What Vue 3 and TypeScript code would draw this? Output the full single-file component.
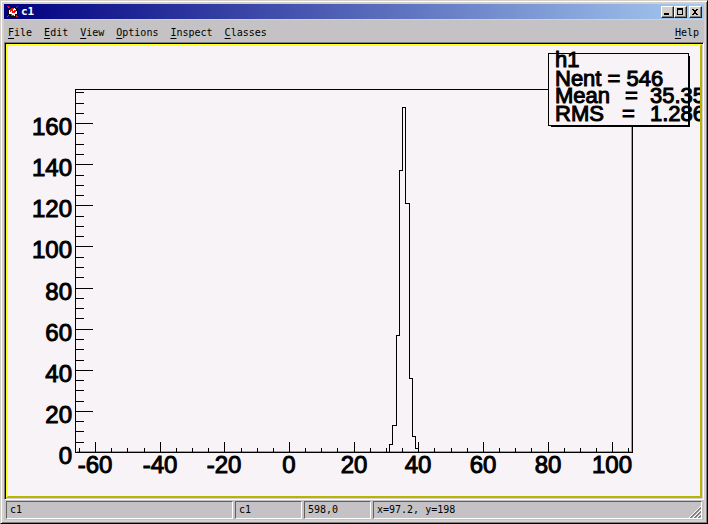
<script setup lang="ts">
interface Tick {
  value: number
  pos: number
  major: boolean
}

const frame = { left: 75, top: 89, right: 632, bottom: 452 }

const xPos = (v: number): number => Math.round(289 + v * 3.233)
const yPos = (v: number): number => Math.round(452 - v * 2.055)

function ticks(from: number, to: number, place: (v: number) => number): Tick[] {
  const out: Tick[] = []
  for (let value = from; value <= to; value += 5) {
    out.push({ value, pos: place(value), major: value % 20 === 0 })
  }
  return out
}

const xTicks = ticks(-65, 105, xPos)
const yTicks = ticks(0, 175, yPos)
const xLabels = xTicks.filter((t) => t.major)
const yLabels = yTicks.filter((t) => t.major)

const bins: { x: number; count: number }[] = [
  { x: 31, count: 4 },
  { x: 32, count: 13 },
  { x: 33, count: 57 },
  { x: 34, count: 137 },
  { x: 35, count: 168 },
  { x: 36, count: 121 },
  { x: 37, count: 36 },
  { x: 38, count: 8 },
  { x: 39, count: 2 },
]

const outline =
  `M${xPos(31)} ${frame.bottom}` +
  bins.map((b) => `V${yPos(b.count)}H${xPos(b.x + 1)}`).join('') +
  `V${frame.bottom}`

const menus = ['File', 'Edit', 'View', 'Options', 'Inspect', 'Classes']

const stats = [
  { name: 'Mean', value: '35.35', y: 103, eq: 625 },
  { name: 'RMS', value: '1.286', y: 121, eq: 622 },
]
</script>

<template>
  <main class="window">
    <header class="title">
      <svg class="logo" viewBox="0 0 12 12" shape-rendering="crispEdges" aria-hidden="true">
        <path d="M2 1H10V3H11V9H9V11H3V9H1V3H2Z" fill="#100808" />
        <path d="M4 2H8V3H9V5H10V8H8V10H4V8H2V4H4Z" fill="#fff" />
        <path d="M0 0H2V1H3V2H1V1H0ZM10 0H11V1H10V2H9V1H10ZM0 10H1V9H2V10H1V11H0ZM9 9H10V10H11V11H9ZM4 2H7V3H6V5H4V6H3V3H4ZM7 4H9V6H8V7H5V5H7ZM4 8H5V9H7V10H4Z" fill="#f01010" />
      </svg>
      <h1>c1</h1>
      <button type="button" aria-label="Minimize">
        <svg viewBox="0 0 10 9" shape-rendering="crispEdges"><path d="M2 6H7V8H2Z" /></svg>
      </button>
      <button type="button" aria-label="Maximize">
        <svg viewBox="0 0 10 9" shape-rendering="crispEdges"><path fill-rule="evenodd" d="M2 1H8V8H2ZM3 3V7H7V3Z" /></svg>
      </button>
      <button type="button" class="close" aria-label="Close">
        <svg viewBox="0 0 10 9" shape-rendering="crispEdges"><path d="M2 2H4V3H6V2H8V3H7V4H6V6H7V7H8V8H6V7H4V8H2V7H3V6H4V4H3V3H2Z" /></svg>
      </button>
    </header>

    <nav class="menu">
      <button v-for="m in menus" :key="m" type="button"><u>{{ m[0] }}</u>{{ m.slice(1) }}</button>
      <button type="button" class="help"><u>H</u>elp</button>
    </nav>

    <section class="canvas">
      <svg class="plot" viewBox="8 46 692 450" role="img" aria-label="h1">
        <g class="lines" transform="translate(0.5 0.5)">
          <path class="soft" d="M76 451H631V90" />
          <path :d="`M${frame.left} ${frame.top}H${frame.right}V${frame.bottom}H${frame.left}Z`" />
          <path v-for="t in xTicks" :key="`x${t.value}`" :d="`M${t.pos} ${frame.bottom}V${t.major ? 441 : 447}`" />
          <path v-for="t in yTicks" :key="`y${t.value}`" :d="`M${frame.left} ${t.pos}H${t.major ? 92 : 83}`" />
          <path :d="outline" />
        </g>
        <g class="labels">
          <text v-for="t in yLabels" :key="t.value" x="72" :y="t.pos + 12" text-anchor="end">{{ t.value }}</text>
          <text v-for="t in xLabels" :key="t.value" :x="t.pos" y="473" text-anchor="middle">{{ t.value }}</text>
        </g>
        <g class="stats">
          <rect class="shadow" x="551" y="56" width="139" height="71" />
          <rect class="box" x="548" y="53" width="141" height="73" />
          <rect class="paper" x="549" y="54" width="139" height="71" />
          <text x="555" y="67">h1</text>
          <text x="555" y="86">Nent = 546</text>
          <text v-for="s in stats" :key="s.name" :y="s.y">
            <tspan x="555">{{ s.name }}</tspan>
            <tspan :x="s.eq">=</tspan>
            <tspan x="650">{{ s.value }}</tspan>
          </text>
        </g>
      </svg>
    </section>

    <footer class="status">
      <span class="wide">c1</span>
      <span>c1</span>
      <span>598,0</span>
      <span class="last">x=97.2, y=198
        <svg class="grip" viewBox="0 0 12 12" aria-hidden="true">
          <path d="M0 12L12 0M4 12L12 4M8 12L12 8" stroke="#fff" />
          <path d="M1 12L12 1M2 12L12 2M5 12L12 5M6 12L12 6M9 12L12 9M10 12L12 10" stroke="#808080" />
        </svg>
      </span>
    </footer>
  </main>
</template>

<style>
body {
  margin: 0;
}
</style>

<style scoped>
.window {
  box-sizing: border-box;
  display: flex;
  flex-direction: column;
  min-height: 100vh;
  padding: 3px;
  border: 1px solid;
  border-color: #d4d0c8 #000 #000 #d4d0c8;
  box-shadow: inset 1px 1px #fff, inset -1px -1px #808080;
  background: #d4d0d0;
  color: #000;
  font: 10px/12px "DejaVu Sans Mono", "Liberation Mono", monospace;
}
.title {
  display: flex;
  align-items: center;
  height: 15px;
  padding: 0 2px 0 3px;
  border-bottom: 1px solid #d4d0d0;
  background: linear-gradient(90deg, #000080, #a6caf0);
}
.logo {
  width: 12px;
  height: 12px;
}
h1 {
  flex: 1;
  margin: 0 0 0 2px;
  padding-top: 1px;
  color: #fff;
  font-size: 11px;
  line-height: 14px;
}
button {
  padding: 0;
  border: 0;
  background: none;
  color: inherit;
  font: inherit;
}
.title button {
  box-sizing: border-box;
  width: 13px;
  height: 12px;
  border: 1px solid;
  border-color: #fff #202020 #202020 #fff;
  background: #d4d0c8;
  box-shadow: inset -1px -1px #808080;
}
.title svg {
  display: block;
}
.title button svg {
  width: 10px;
  height: 9px;
}
.title .close {
  margin-left: 2px;
}
.menu {
  box-sizing: border-box;
  display: flex;
  gap: 12px;
  align-items: center;
  height: 22px;
  padding: 3px 5px 0 4px;
  background: #c4c2c4;
}
.help {
  margin-left: auto;
}
u {
  text-underline-offset: 2px;
}
.canvas {
  flex: 1;
  display: flex;
  border: 1px solid;
  border-color: #808080 #fff #fff #808080;
  box-shadow: inset 1px 1px #000, inset -1px -1px #d4d0d0;
  padding: 1px;
}
.plot {
  flex: 1;
  min-width: 0;
  border: 2px solid;
  border-color: #ffff20 #b8b400 #b8b400 #ffff20;
  background: #f7f3f7;
  overflow: hidden;
}
.lines {
  fill: none;
  stroke: #000;
  shape-rendering: crispEdges;
}
.soft {
  stroke: #a0a0a0;
}
.labels,
.stats text {
  font: 24px "Liberation Sans", Arial, sans-serif;
  stroke: #000;
  stroke-width: 1px;
}
.stats text {
  font-size: 22px;
}
.stats rect {
  shape-rendering: crispEdges;
}
.box {
  fill: #000;
}
.paper {
  fill: #f7f3f7;
}
.status {
  display: flex;
  gap: 2px;
  height: 18px;
  padding: 1px 2px;
  background: #c4c2c4;
}
.status span {
  box-sizing: border-box;
  width: 67px;
  padding: 2px 3px;
  border: 1px solid;
  border-color: #606060 #fff #fff #606060;
}
.status .wide {
  width: 227px;
}
.status .last {
  display: flex;
  flex: 1;
  justify-content: space-between;
  padding-right: 0;
}
.grip {
  width: 12px;
  height: 12px;
  margin-top: 2px;
}
</style>
